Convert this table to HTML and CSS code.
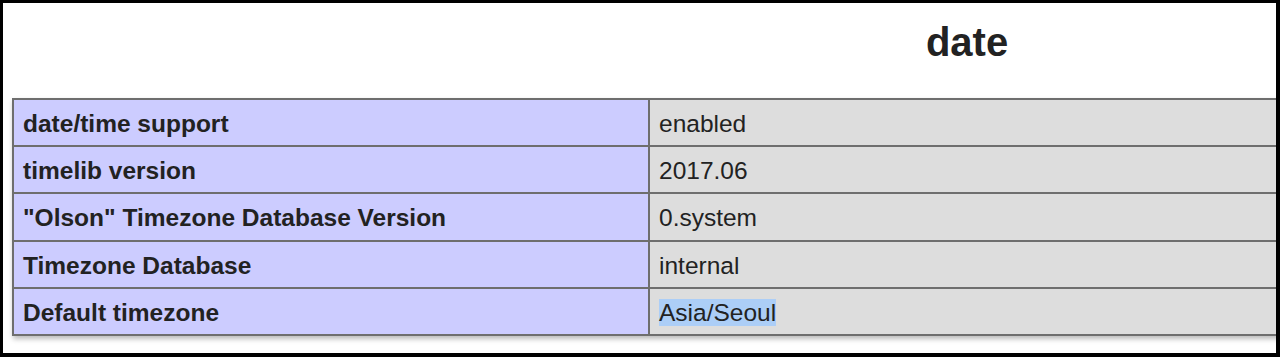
FILE: index.html
```html
<!DOCTYPE html>
<html>
<head>
<meta charset="utf-8">
<title>date</title>
<link rel="stylesheet" href="styles.css">
</head>
<body>
<div class="frame">
  <div class="content">
    <h2 class="title">date</h2>
    <table class="info">
      <colgroup><col class="col-e"><col class="col-v"></colgroup>
      <tbody>
        <tr><td class="e">date/time support</td><td class="v">enabled</td></tr>
        <tr><td class="e">timelib version</td><td class="v">2017.06</td></tr>
        <tr><td class="e">"Olson" Timezone Database Version</td><td class="v">0.system</td></tr>
        <tr><td class="e">Timezone Database</td><td class="v">internal</td></tr>
        <tr><td class="e">Default timezone</td><td class="v"><span class="sel">Asia/Seoul</span></td></tr>
      </tbody>
    </table>
  </div>
</div>
</body>
</html>
```
FILE: styles.css
```css
html, body {
  margin: 0;
  padding: 0;
  background: #000;
}
body {
  font-family: "Liberation Sans", Arial, Helvetica, sans-serif;
  color: #222;
}
.frame {
  box-sizing: border-box;
  width: 1280px;
  height: 357px;
  border-style: solid;
  border-color: #000;
  border-width: 3px 4px 4px 3px;
  background: #fff;
  overflow: hidden;
}
.content {
  width: 1910px;
  padding: 16px 0 0 9px;
}
.title {
  margin: 0;
  font-size: 40px;
  line-height: 46px;
  font-weight: bold;
  text-align: center;
  color: #222;
}
.info {
  margin-top: 33px;
  width: 1910px;
  border-collapse: collapse;
  table-layout: fixed;
  box-shadow: 1px 3px 5px #bbb;
}
.col-e { width: 636px; }
.info td {
  height: 47.2px;
  border: 2px solid #6e6e6e;
  padding: 3px 9px 0 9px;
  font-size: 24.5px;
  line-height: 28px;
  vertical-align: middle;
  box-sizing: border-box;
}
.e {
  background: #ccccff;
  font-weight: bold;
}
.v {
  background: #dddddd;
}
.sel {
  background: #accef7;
}
```
